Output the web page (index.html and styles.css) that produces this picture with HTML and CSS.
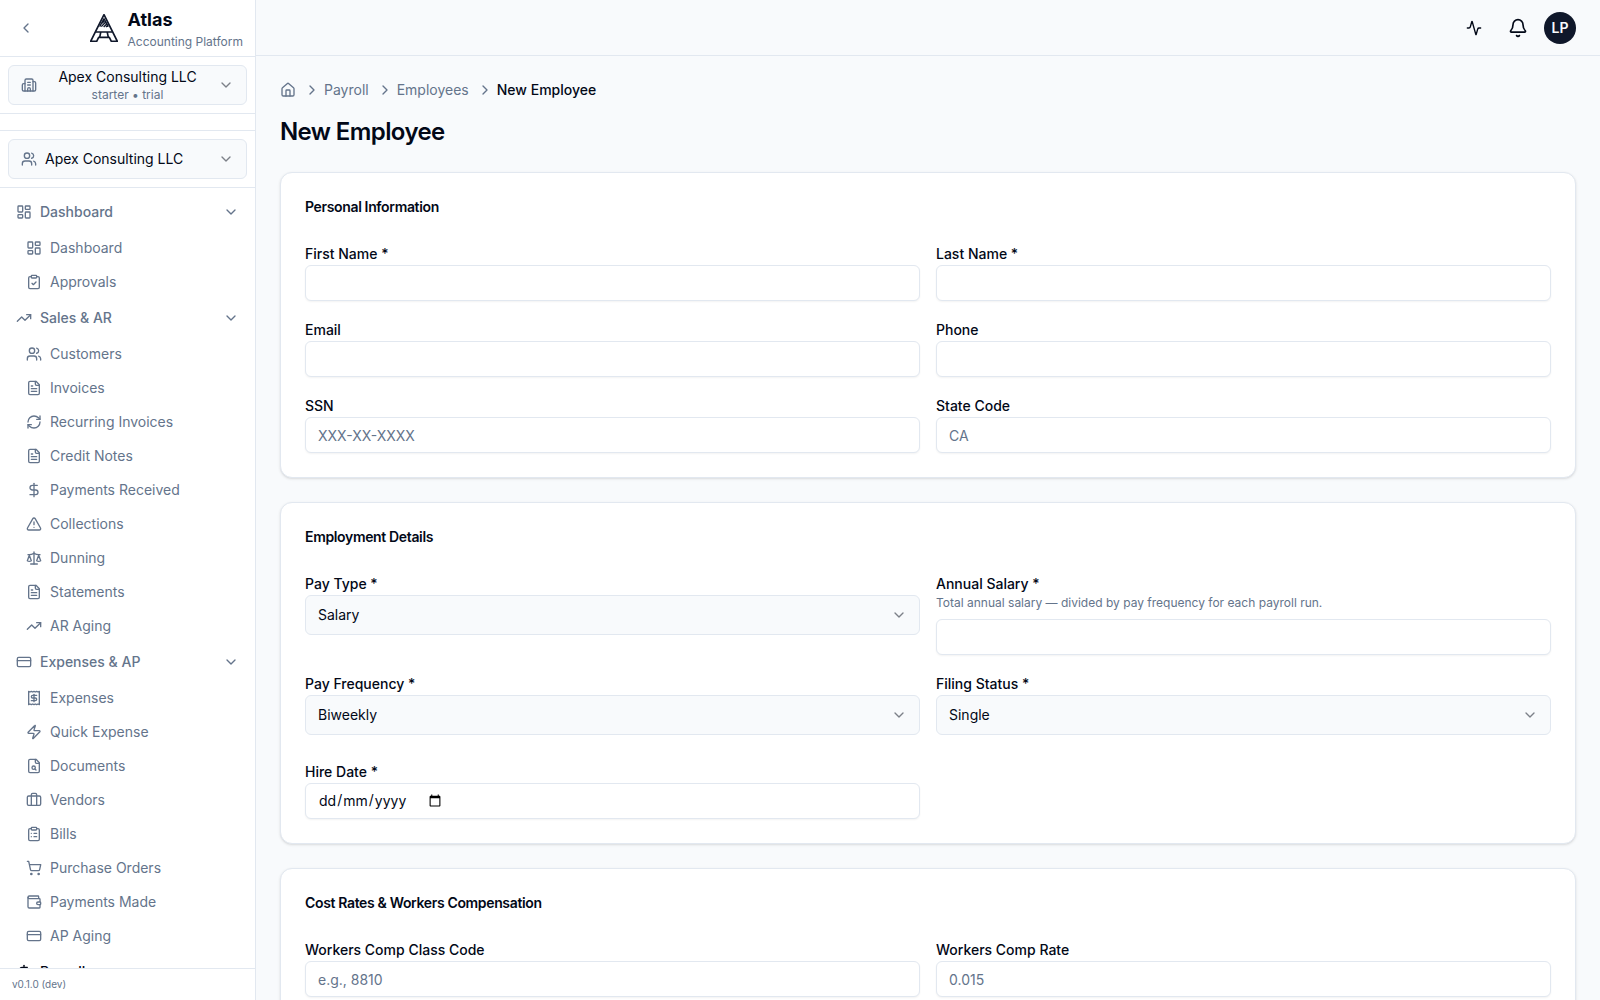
FILE: index.html
```html
<!DOCTYPE html>
<html lang="en-GB">
<head>
  <meta charset="UTF-8" />
  <meta name="viewport" content="width=device-width, initial-scale=1" />
  <title>New Employee — Atlas</title>
  <link rel="stylesheet" href="styles.css">
</head>
<body>
  <!-- Icon sprite -->
  <svg class="sprite" aria-hidden="true">
    <symbol id="chevron-left" viewBox="0 0 24 24"><path d="m15 18-6-6 6-6"/></symbol>
    <symbol id="chevron-right" viewBox="0 0 24 24"><path d="m9 18 6-6-6-6"/></symbol>
    <symbol id="chevron-down" viewBox="0 0 24 24"><path d="m6 9 6 6 6-6"/></symbol>
    <symbol id="building" viewBox="0 0 24 24"><path d="M10 12h4"/><path d="M10 8h4"/><path d="M14 21v-3a2 2 0 0 0-4 0v3"/><path d="M6 10H4a2 2 0 0 0-2 2v7a2 2 0 0 0 2 2h16a2 2 0 0 0 2-2V9a2 2 0 0 0-2-2h-2"/><path d="M6 21V5a2 2 0 0 1 2-2h8a2 2 0 0 1 2 2v16"/></symbol>
    <symbol id="users" viewBox="0 0 24 24"><path d="M16 21v-2a4 4 0 0 0-4-4H6a4 4 0 0 0-4 4v2"/><circle cx="9" cy="7" r="4"/><path d="M22 21v-2a4 4 0 0 0-3-3.87"/><path d="M16 3.13a4 4 0 0 1 0 7.75"/></symbol>
    <symbol id="dashboard" viewBox="0 0 24 24"><rect width="7" height="9" x="3" y="3" rx="1"/><rect width="7" height="5" x="14" y="3" rx="1"/><rect width="7" height="9" x="14" y="12" rx="1"/><rect width="7" height="5" x="3" y="16" rx="1"/></symbol>
    <symbol id="clipboard-check" viewBox="0 0 24 24"><rect width="8" height="4" x="8" y="2" rx="1"/><path d="M16 4h2a2 2 0 0 1 2 2v14a2 2 0 0 1-2 2H6a2 2 0 0 1-2-2V6a2 2 0 0 1 2-2h2"/><path d="m9 14 2 2 4-4"/></symbol>
    <symbol id="clipboard-list" viewBox="0 0 24 24"><rect width="8" height="4" x="8" y="2" rx="1"/><path d="M16 4h2a2 2 0 0 1 2 2v14a2 2 0 0 1-2 2H6a2 2 0 0 1-2-2V6a2 2 0 0 1 2-2h2"/><path d="M12 11h4"/><path d="M12 16h4"/><path d="M8 11h.01"/><path d="M8 16h.01"/></symbol>
    <symbol id="trending-up" viewBox="0 0 24 24"><path d="m22 7-8.5 8.5-5-5L2 17"/><path d="M16 7h6v6"/></symbol>
    <symbol id="file-text" viewBox="0 0 24 24"><path d="M15 2H6a2 2 0 0 0-2 2v16a2 2 0 0 0 2 2h12a2 2 0 0 0 2-2V7Z"/><path d="M14 2v4a2 2 0 0 0 2 2h4"/><path d="M10 9H8"/><path d="M16 13H8"/><path d="M16 17H8"/></symbol>
    <symbol id="file-search" viewBox="0 0 24 24"><path d="M15 2H6a2 2 0 0 0-2 2v16a2 2 0 0 0 2 2h12a2 2 0 0 0 2-2V7Z"/><path d="M14 2v4a2 2 0 0 0 2 2h4"/><circle cx="11.5" cy="14.5" r="2.5"/><path d="M13.3 16.3 15 18"/></symbol>
    <symbol id="refresh" viewBox="0 0 24 24"><path d="M3 12a9 9 0 0 1 9-9 9.75 9.75 0 0 1 6.74 2.74L21 8"/><path d="M21 3v5h-5"/><path d="M21 12a9 9 0 0 1-9 9 9.75 9.75 0 0 1-6.74-2.74L3 16"/><path d="M8 16H3v5"/></symbol>
    <symbol id="dollar" viewBox="0 0 24 24"><path d="M12 2v20"/><path d="M17 5H9.5a3.5 3.5 0 0 0 0 7h5a3.5 3.5 0 0 1 0 7H6"/></symbol>
    <symbol id="alert" viewBox="0 0 24 24"><path d="m21.73 18-8-14a2 2 0 0 0-3.48 0l-8 14A2 2 0 0 0 4 21h16a2 2 0 0 0 1.73-3"/><path d="M12 9v4"/><path d="M12 17h.01"/></symbol>
    <symbol id="scale" viewBox="0 0 24 24"><path d="m16 16 3-8 3 8c-.87.65-1.92 1-3 1s-2.13-.35-3-1Z"/><path d="m2 16 3-8 3 8c-.87.65-1.92 1-3 1s-2.13-.35-3-1Z"/><path d="M7 21h10"/><path d="M12 3v18"/><path d="M3 7h2c2 0 5-1 7-2 2 1 5 2 7 2h2"/></symbol>
    <symbol id="card" viewBox="0 0 24 24"><rect width="20" height="14" x="2" y="5" rx="2"/><path d="M2 10h20"/></symbol>
    <symbol id="receipt" viewBox="0 0 24 24"><path d="M4 2v20l2-1 2 1 2-1 2 1 2-1 2 1 2-1 2 1V2l-2 1-2-1-2 1-2-1-2 1-2-1-2 1Z"/><path d="M16 8h-6a2 2 0 1 0 0 4h4a2 2 0 1 1 0 4H8"/><path d="M12 17.5v-11"/></symbol>
    <symbol id="zap" viewBox="0 0 24 24"><path d="M4 14a1 1 0 0 1-.78-1.63l9.9-10.2a.5.5 0 0 1 .86.46l-1.92 6.02A1 1 0 0 0 13 10h7a1 1 0 0 1 .78 1.63l-9.9 10.2a.5.5 0 0 1-.86-.46l1.92-6.02A1 1 0 0 0 11 14z"/></symbol>
    <symbol id="briefcase" viewBox="0 0 24 24"><path d="M16 20V4a2 2 0 0 0-2-2h-4a2 2 0 0 0-2 2v16"/><rect width="20" height="14" x="2" y="6" rx="2"/></symbol>
    <symbol id="cart" viewBox="0 0 24 24"><circle cx="8" cy="21" r="1"/><circle cx="19" cy="21" r="1"/><path d="M2.05 2.05h2l2.66 12.42a2 2 0 0 0 2 1.58h9.78a2 2 0 0 0 1.95-1.57l1.65-7.43H5.12"/></symbol>
    <symbol id="wallet" viewBox="0 0 24 24"><path d="M19 7V4a1 1 0 0 0-1-1H5a2 2 0 0 0 0 4h15a1 1 0 0 1 1 1v4h-3a2 2 0 0 0 0 4h3a1 1 0 0 0 1-1v-2a1 1 0 0 0-1-1"/><path d="M3 5v14a2 2 0 0 0 2 2h15a1 1 0 0 0 1-1v-4"/></symbol>
    <symbol id="home" viewBox="0 0 24 24"><path d="M15 21v-8a1 1 0 0 0-1-1h-4a1 1 0 0 0-1 1v8"/><path d="M3 10a2 2 0 0 1 .71-1.53l7-6a2 2 0 0 1 2.58 0l7 6A2 2 0 0 1 21 10v9a2 2 0 0 1-2 2H5a2 2 0 0 1-2-2z"/></symbol>
    <symbol id="activity" viewBox="0 0 24 24"><path d="M22 12h-2.48a2 2 0 0 0-1.93 1.46l-2.35 8.36a.25.25 0 0 1-.48 0L9.24 2.18a.25.25 0 0 0-.48 0l-2.35 8.36A2 2 0 0 1 4.49 12H2"/></symbol>
    <symbol id="bell" viewBox="0 0 24 24"><path d="M10.27 21a2 2 0 0 0 3.46 0"/><path d="M3.26 15.33A1 1 0 0 0 4 17h16a1 1 0 0 0 .74-1.67C19.41 13.96 18 12.5 18 8A6 6 0 0 0 6 8c0 4.5-1.41 5.96-2.74 7.33"/></symbol>
  </svg>

  <div class="layout">
    <aside class="sidebar">
      <div class="brand">
        <button class="collapse" type="button" aria-label="Collapse sidebar"><svg class="icon"><use href="#chevron-left"/></svg></button>
        <a class="brand-link" href="#">
          <svg class="logo" viewBox="0 0 84 84" aria-hidden="true">
            <path d="M42 2 2 82h18l6-12h32l6 12h18Z"/>
            <path d="M18 54h48M29 70l3-14M55 70l-3-14"/>
            <path class="hatch" d="M42 14 29 38M42 14l13 24M34 38l13-14M41 39l9-9M48 39l4-4M36 28l7-7"/>
          </svg>
          <span class="brand-text">
            <span class="brand-name">Atlas</span>
            <span class="brand-sub">Accounting Platform</span>
          </span>
        </a>
      </div>

      <div class="switcher">
        <button class="picker" type="button">
          <svg class="icon"><use href="#building"/></svg>
          <span class="picker-text centered">
            <span>Apex Consulting LLC</span>
            <small>starter • trial</small>
          </span>
          <svg class="icon faded"><use href="#chevron-down"/></svg>
        </button>
      </div>

      <div class="switcher client">
        <button class="picker" type="button">
          <svg class="icon"><use href="#users"/></svg>
          <span class="picker-text">Apex Consulting LLC</span>
          <svg class="icon faded"><use href="#chevron-down"/></svg>
        </button>
      </div>

      <nav class="nav" aria-label="Main">
        <button class="group" type="button"><svg class="icon"><use href="#dashboard"/></svg><span>Dashboard</span><svg class="icon"><use href="#chevron-down"/></svg></button>
        <ul class="links">
          <li><a href="#"><svg class="icon"><use href="#dashboard"/></svg>Dashboard</a></li>
          <li><a href="#"><svg class="icon"><use href="#clipboard-check"/></svg>Approvals</a></li>
        </ul>

        <button class="group" type="button"><svg class="icon"><use href="#trending-up"/></svg><span>Sales &amp; AR</span><svg class="icon"><use href="#chevron-down"/></svg></button>
        <ul class="links">
          <li><a href="#"><svg class="icon"><use href="#users"/></svg>Customers</a></li>
          <li><a href="#"><svg class="icon"><use href="#file-text"/></svg>Invoices</a></li>
          <li><a href="#"><svg class="icon"><use href="#refresh"/></svg>Recurring Invoices</a></li>
          <li><a href="#"><svg class="icon"><use href="#file-text"/></svg>Credit Notes</a></li>
          <li><a href="#"><svg class="icon"><use href="#dollar"/></svg>Payments Received</a></li>
          <li><a href="#"><svg class="icon"><use href="#alert"/></svg>Collections</a></li>
          <li><a href="#"><svg class="icon"><use href="#scale"/></svg>Dunning</a></li>
          <li><a href="#"><svg class="icon"><use href="#file-text"/></svg>Statements</a></li>
          <li><a href="#"><svg class="icon"><use href="#trending-up"/></svg>AR Aging</a></li>
        </ul>

        <button class="group" type="button"><svg class="icon"><use href="#card"/></svg><span>Expenses &amp; AP</span><svg class="icon"><use href="#chevron-down"/></svg></button>
        <ul class="links">
          <li><a href="#"><svg class="icon"><use href="#receipt"/></svg>Expenses</a></li>
          <li><a href="#"><svg class="icon"><use href="#zap"/></svg>Quick Expense</a></li>
          <li><a href="#"><svg class="icon"><use href="#file-search"/></svg>Documents</a></li>
          <li><a href="#"><svg class="icon"><use href="#briefcase"/></svg>Vendors</a></li>
          <li><a href="#"><svg class="icon"><use href="#clipboard-list"/></svg>Bills</a></li>
          <li><a href="#"><svg class="icon"><use href="#cart"/></svg>Purchase Orders</a></li>
          <li><a href="#"><svg class="icon"><use href="#wallet"/></svg>Payments Made</a></li>
          <li><a href="#"><svg class="icon"><use href="#card"/></svg>AP Aging</a></li>
        </ul>

        <button class="group active" type="button"><svg class="icon"><use href="#dollar"/></svg><span>Payroll</span><svg class="icon"><use href="#chevron-down"/></svg></button>
      </nav>

      <div class="version">v0.1.0 (dev)</div>
    </aside>

    <div class="page">
      <header class="topbar">
        <button class="icon-btn" type="button" aria-label="Activity"><svg class="icon"><use href="#activity"/></svg></button>
        <button class="icon-btn" type="button" aria-label="Notifications"><svg class="icon icon-lg"><use href="#bell"/></svg></button>
        <button class="avatar" type="button">LP</button>
      </header>

      <main class="content">
        <nav aria-label="Breadcrumb">
          <ol class="breadcrumb">
            <li><a href="#" aria-label="Home"><svg class="icon"><use href="#home"/></svg></a></li>
            <li><svg class="icon"><use href="#chevron-right"/></svg><a href="#">Payroll</a></li>
            <li><svg class="icon"><use href="#chevron-right"/></svg><a href="#">Employees</a></li>
            <li><svg class="icon"><use href="#chevron-right"/></svg><span class="current">New Employee</span></li>
          </ol>
        </nav>
        <h1>New Employee</h1>

        <form class="form">
          <section class="card">
            <h2>Personal Information</h2>
            <div class="grid">
              <div class="field">
                <label for="first_name">First Name *</label>
                <input type="text" id="first_name" required />
              </div>
              <div class="field">
                <label for="last_name">Last Name *</label>
                <input type="text" id="last_name" required />
              </div>
              <div class="field">
                <label for="email">Email</label>
                <input type="email" id="email" />
              </div>
              <div class="field">
                <label for="phone">Phone</label>
                <input type="tel" id="phone" />
              </div>
              <div class="field">
                <label for="ssn">SSN</label>
                <input type="text" id="ssn" placeholder="XXX-XX-XXXX" />
              </div>
              <div class="field">
                <label for="state">State Code</label>
                <input type="text" id="state" placeholder="CA" maxlength="2" />
              </div>
            </div>
          </section>

          <section class="card">
            <h2>Employment Details</h2>
            <div class="grid">
              <div class="field">
                <label for="pay_type">Pay Type *</label>
                <div class="select">
                  <select id="pay_type"><option>Salary</option><option>Hourly</option></select>
                  <svg class="icon faded"><use href="#chevron-down"/></svg>
                </div>
              </div>
              <div class="field">
                <label for="salary">Annual Salary *</label>
                <p class="hint" id="salary_hint">Total annual salary — divided by pay frequency for each payroll run.</p>
                <input type="text" id="salary" inputmode="decimal" aria-describedby="salary_hint" required />
              </div>
              <div class="field">
                <label for="frequency">Pay Frequency *</label>
                <div class="select">
                  <select id="frequency"><option>Biweekly</option><option>Weekly</option><option>Monthly</option></select>
                  <svg class="icon faded"><use href="#chevron-down"/></svg>
                </div>
              </div>
              <div class="field">
                <label for="filing">Filing Status *</label>
                <div class="select">
                  <select id="filing"><option>Single</option><option>Married</option></select>
                  <svg class="icon faded"><use href="#chevron-down"/></svg>
                </div>
              </div>
              <div class="field">
                <label for="hire_date">Hire Date *</label>
                <input type="date" id="hire_date" required />
              </div>
            </div>
          </section>

          <section class="card">
            <h2>Cost Rates &amp; Workers Compensation</h2>
            <div class="grid">
              <div class="field">
                <label for="class_code">Workers Comp Class Code</label>
                <input type="text" id="class_code" placeholder="e.g., 8810" />
              </div>
              <div class="field">
                <label for="comp_rate">Workers Comp Rate</label>
                <input type="text" id="comp_rate" placeholder="0.015" />
              </div>
            </div>
          </section>
        </form>
      </main>
    </div>
  </div>
</body>
</html>
```

FILE: styles.css
```css
:root {
  --bg: #f8fafc;
  --white: #ffffff;
  --text: #020817;
  --muted: #64748b;
  --border: #e2e8f0;
  --primary: #0f172a;
}

* {
  box-sizing: border-box;
  margin: 0;
  padding: 0;
}

body {
  background: var(--bg);
  color: var(--text);
  font-family: Inter, sans-serif;
  font-size: 14px;
  line-height: 20px;
}

button, input, select {
  font: inherit;
  color: inherit;
}
button {
  background: none;
  border: none;
  cursor: pointer;
}
a {
  color: inherit;
  text-decoration: none;
}
ul, ol {
  list-style: none;
}

.sprite {
  display: none;
}
.icon {
  width: 16px;
  height: 16px;
  flex-shrink: 0;
  fill: none;
  stroke: currentColor;
  stroke-width: 2;
  stroke-linecap: round;
  stroke-linejoin: round;
}
.icon-lg {
  width: 20px;
  height: 20px;
}

.layout {
  display: flex;
  height: 100vh;
}

/* Sidebar */
.sidebar {
  width: 256px;
  flex-shrink: 0;
  display: flex;
  flex-direction: column;
  background: var(--white);
  border-right: 1px solid var(--border);
}
.brand {
  display: flex;
  align-items: center;
  justify-content: space-between;
  padding: 6px 12px;
  border-bottom: 1px solid var(--border);
}
.collapse {
  display: flex;
  padding: 6px;
  color: var(--muted);
}
.brand-link {
  display: flex;
  align-items: center;
  gap: 8px;
}
.logo {
  width: 32px;
  height: 32px;
  padding: 2px;
  fill: none;
  stroke: var(--primary);
  stroke-width: 5;
  stroke-linejoin: round;
}
.logo .hatch {
  stroke-width: 4;
}
.brand-text {
  display: flex;
  flex-direction: column;
}
.brand-name {
  font-size: 18px;
  line-height: 28px;
  font-weight: 700;
}
.brand-sub {
  font-size: 12px;
  line-height: 16px;
  color: var(--muted);
}

.switcher {
  padding: 8px;
  border-bottom: 1px solid var(--border);
}
.client {
  margin-top: 16px;
  border-top: 1px solid var(--border);
}
.picker {
  width: 100%;
  height: 40px;
  display: flex;
  align-items: center;
  gap: 8px;
  padding: 0 12px;
  background: var(--bg);
  border: 1px solid var(--border);
  border-radius: 6px;
}
.picker .icon {
  color: var(--muted);
}
.picker .faded,
.select .faded {
  color: var(--text);
  opacity: 0.5;
}
.picker-text {
  flex: 1;
  text-align: left;
}
.centered {
  display: flex;
  flex-direction: column;
  text-align: center;
}
.picker-text small {
  font-size: 12px;
  line-height: 16px;
  color: var(--muted);
}

.nav {
  flex: 1;
  min-height: 0;
  overflow-y: auto;
  scrollbar-width: none;
  padding: 8px;
}
.group {
  width: 100%;
  display: flex;
  align-items: center;
  gap: 8px;
  padding: 6px 8px;
  color: var(--muted);
  font-weight: 500;
}
.group span {
  flex: 1;
  text-align: left;
}
.group.active {
  color: var(--text);
}
.links {
  display: flex;
  flex-direction: column;
  gap: 2px;
  padding: 4px 0 4px 10px;
}
.links a {
  display: flex;
  align-items: center;
  gap: 8px;
  padding: 6px 8px;
  color: var(--muted);
}
.version {
  padding: 7px 12px 8px;
  border-top: 1px solid var(--border);
  font-size: 10px;
  line-height: 16px;
  color: var(--muted);
}

/* Main column */
.page {
  flex: 1;
  min-width: 0;
  display: flex;
  flex-direction: column;
}
.topbar {
  height: 56px;
  flex-shrink: 0;
  display: flex;
  align-items: center;
  justify-content: flex-end;
  gap: 8px;
  padding: 0 24px;
  border-bottom: 1px solid var(--border);
}
.icon-btn {
  width: 36px;
  height: 36px;
  display: flex;
  align-items: center;
  justify-content: center;
}
.avatar {
  width: 32px;
  height: 32px;
  border-radius: 50%;
  background: var(--primary);
  color: var(--bg);
  font-weight: 600;
}

.content {
  flex: 1;
  min-height: 0;
  overflow-y: auto;
  scrollbar-width: none;
  padding: 24px;
}
.breadcrumb {
  display: flex;
  gap: 8px;
  margin-bottom: 16px;
  color: var(--muted);
}
.breadcrumb li {
  display: flex;
  align-items: center;
  gap: 4px;
}
.breadcrumb a {
  display: flex;
}
.breadcrumb .current {
  color: var(--text);
  font-weight: 500;
}
h1 {
  font-size: 24px;
  line-height: 32px;
  font-weight: 600;
  letter-spacing: -0.025em;
  margin-bottom: 24px;
}

/* Form cards */
.form {
  display: flex;
  flex-direction: column;
  gap: 24px;
}
.card {
  padding: 24px;
  background: var(--white);
  border: 1px solid var(--border);
  border-radius: 12px;
  box-shadow: 0 1px 3px rgba(0, 0, 0, 0.1), 0 1px 2px -1px rgba(0, 0, 0, 0.1);
}
.card h2 {
  font-size: 14px;
  line-height: 20px;
  font-weight: 600;
  letter-spacing: -0.025em;
  margin-bottom: 24px;
}
.grid {
  display: grid;
  grid-template-columns: repeat(2, 1fr);
  gap: 16px;
}
.field {
  font-size: 16px;
  line-height: 24px;
}
.field label {
  font-size: 14px;
  line-height: 20px;
  font-weight: 500;
}
.field .hint {
  font-size: 12px;
  line-height: 16px;
  color: var(--muted);
  margin-bottom: 8px;
}
.field input {
  display: flex;
  width: 100%;
  height: 36px;
  padding: 4px 12px;
  font-size: 14px;
  line-height: 20px;
  background: var(--white);
  border: 1px solid var(--border);
  border-radius: 6px;
  box-shadow: 0 1px 2px rgba(0, 0, 0, 0.05);
}
.field input::placeholder {
  color: var(--muted);
}

/* Always show dates day first */
input::-webkit-datetime-edit-fields-wrapper {
  display: inline-grid;
  grid-auto-flow: column;
}
input::-webkit-datetime-edit-day-field {
  grid-row: 1;
  grid-column: 1;
}
input::-webkit-datetime-edit-month-field {
  grid-row: 1;
  grid-column: 3;
}
input::-webkit-datetime-edit-year-field {
  grid-row: 1;
  grid-column: 5;
}
input::-webkit-datetime-edit-text {
  grid-row: 1;
}

.select {
  position: relative;
  margin-bottom: 8px;
}
.select select {
  display: block;
  width: 100%;
  height: 40px;
  padding: 0 36px 0 12px;
  appearance: none;
  font-size: 14px;
  line-height: 20px;
  background: var(--bg);
  border: 1px solid var(--border);
  border-radius: 6px;
}
.select .icon {
  position: absolute;
  right: 13px;
  top: 12px;
  pointer-events: none;
}

@media (max-width: 900px) {
  .grid {
    grid-template-columns: 1fr;
  }
}
```
